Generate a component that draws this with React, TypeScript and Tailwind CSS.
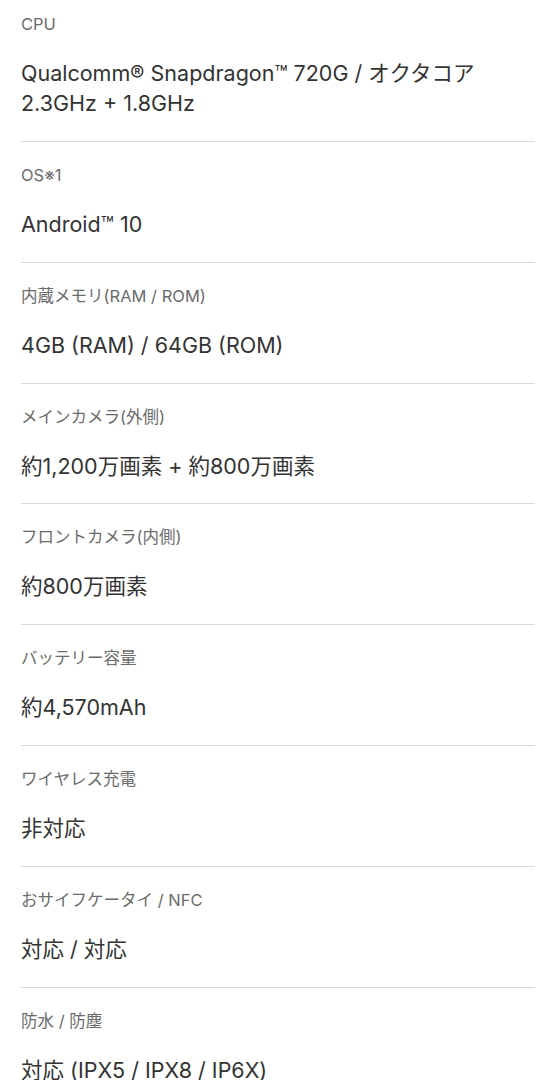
const specs = [
  { label: "CPU", value: ["Qualcomm® Snapdragon™ 720G / オクタコア", "2.3GHz + 1.8GHz"] },
  { label: "OS※1", value: ["Android™ 10"] },
  { label: "内蔵メモリ(RAM / ROM)", value: ["4GB (RAM) / 64GB (ROM)"] },
  { label: "メインカメラ(外側)", value: ["約1,200万画素 + 約800万画素"] },
  { label: "フロントカメラ(内側)", value: ["約800万画素"] },
  { label: "バッテリー容量", value: ["約4,570mAh"] },
  { label: "ワイヤレス充電", value: ["非対応"] },
  { label: "おサイフケータイ / NFC", value: ["対応 / 対応"] },
  { label: "防水 / 防塵", value: ["対応 (IPX5 / IPX8 / IP6X)"] },
];

export default function App() {
  return (
    <div
      className="h-[1080px] overflow-hidden bg-white px-[21px]"
      style={{ fontFamily: 'Inter, "Noto Sans CJK JP", sans-serif' }}
    >
      <div className="-mt-[9px] w-[514px]">
        {specs.map((s, i) => (
          <div
            key={s.label}
            className={
              "pt-[23px] pb-[22.85px] " +
              (i < specs.length - 1 ? "border-b border-[#d9d9d9]" : "")
            }
          >
            <div className="text-[16.5px] leading-[20px] text-[#6b6b6b]">{s.label}</div>
            <div className="mt-[24px] text-[21.5px] leading-[30px] text-[#333333]">
              {s.value.map((v) => (
                <div key={v}>{v}</div>
              ))}
            </div>
          </div>
        ))}
      </div>
    </div>
  );
}
